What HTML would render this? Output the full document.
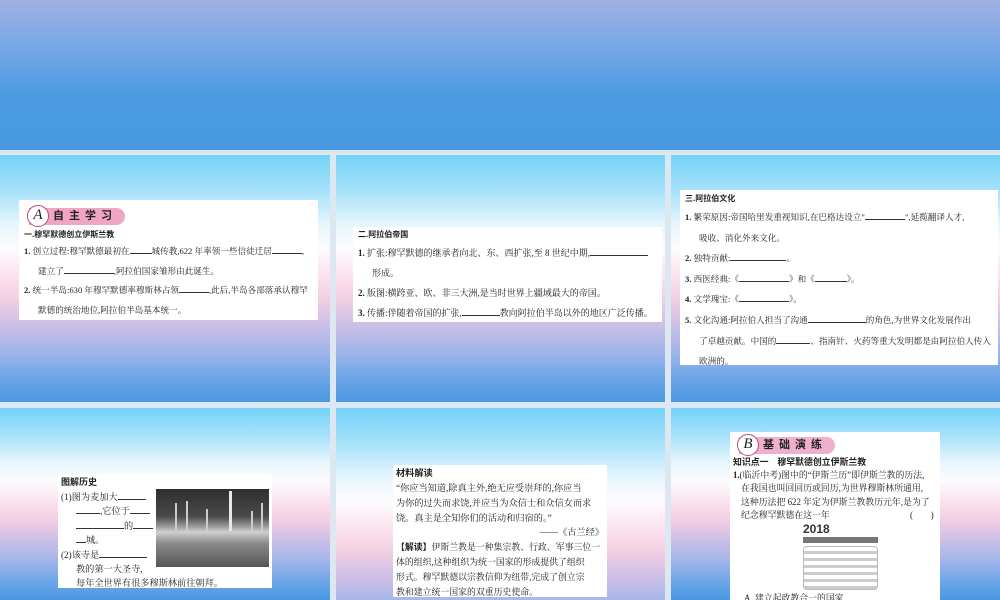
<!DOCTYPE html>
<html><head><meta charset="utf-8"><style>
*{margin:0;padding:0;box-sizing:border-box}
html,body{width:1000px;height:600px;overflow:hidden}
body{background:#dde7f1;position:relative;font-family:"Liberation Serif","Noto Serif CJK SC",serif;color:#222}
.top{position:absolute;left:0;top:0;width:1000px;height:150px;background:linear-gradient(#a0b1e3 0%,#78a8e6 30%,#4b9ae2 65%,#4899e1 100%)}
.p{position:absolute;height:247px;background:linear-gradient(#74d2f8 0%,#a9e2fa 15%,#e6f6fd 28%,#fdfbfd 38%,#fae0ec 50%,#f3cfe2 58%,#cfc0e6 68%,#9fb4ea 80%,#6ea6e8 90%,#4a98e2 100%)}
.w{position:absolute;background:#fff;overflow:hidden;white-space:nowrap}
.b{font-family:"Liberation Sans","Noto Sans CJK SC",sans-serif;font-weight:bold}
.u{display:inline-block;border-bottom:1px solid #333;height:10px;vertical-align:baseline}
.badge{display:inline-block;background:#f1a5c5;border-radius:0 10px 10px 0;height:17px;padding:0 8px 0 24px;font-family:"Liberation Sans","Noto Sans CJK SC",sans-serif;font-weight:bold;font-size:11px;line-height:17px;letter-spacing:5px;position:relative;color:#222}
.badge i{position:absolute;left:-2px;top:-3px;width:22px;height:22px;border-radius:50%;border:1.5px solid #b04a80;background:#fff;font-style:italic;font-family:"Liberation Serif",serif;font-size:15px;line-height:19px;text-align:center;letter-spacing:0;font-weight:normal}
.ind{padding-left:14px}
</style></head><body>
<div class="top"></div>
<div class="p" style="left:0;top:155px;width:330px"></div>
<div class="p" style="left:336px;top:155px;width:329px"></div>
<div class="p" style="left:671px;top:155px;width:329px"></div>
<div class="p" style="left:0;top:408px;width:330px;height:192px"></div>
<div class="p" style="left:336px;top:408px;width:329px;height:192px;background-size:100% 247px"></div>
<div class="p" style="left:671px;top:408px;width:329px;height:192px"></div>

<div class="w" style="left:19px;top:200px;width:299px;height:120px;padding:4px 5px;font-size:8.6px;line-height:19.5px">
<div style="margin:3px 0 0 5px;height:20px"><span class="badge"><i>A</i>自主学习</span></div>
<div class="b" style="font-size:8px;line-height:14px;margin-top:1px">一.穆罕默德创立伊斯兰教</div>
<div><b>1.</b> 创立过程:穆罕默德最初在<span class="u" style="width:22px"></span>城传教,622 年率领一些信徒迁居<span class="u" style="width:30px"></span>,</div>
<div class="ind">建立了<span class="u" style="width:50px"></span>,阿拉伯国家雏形由此诞生。</div>
<div><b>2.</b> 统一半岛:630 年穆罕默德率穆斯林占领<span class="u" style="width:30px"></span>,此后,半岛各部落承认穆罕</div>
<div class="ind">默德的统治地位,阿拉伯半岛基本统一。</div>
</div>

<div class="w" style="left:353px;top:227px;width:309px;height:95px;padding:0 5px;font-size:9px;line-height:20px">
<div class="b" style="font-size:8px;line-height:16px">二.阿拉伯帝国</div>
<div><b>1.</b> 扩张:穆罕默德的继承者向北、东、西扩张,至 8 世纪中期,<span class="u" style="width:58px"></span></div>
<div class="ind">形成。</div>
<div><b>2.</b> 版图:横跨亚、欧、非三大洲,是当时世界上疆域最大的帝国。</div>
<div><b>3.</b> 传播:伴随着帝国的扩张,<span class="u" style="width:38px"></span>教向阿拉伯半岛以外的地区广泛传播。</div>
</div>

<div class="w" style="left:680px;top:190px;width:318px;height:175px;padding:0 5px;font-size:8.6px;line-height:20.6px">
<div class="b" style="font-size:8px;line-height:17px">三.阿拉伯文化</div>
<div><b>1.</b> 繁荣原因:帝国哈里发重视知识,在巴格达设立"<span class="u" style="width:40px"></span>",延揽翻译人才,</div>
<div class="ind">吸收、消化外来文化。</div>
<div><b>2.</b> 独特贡献:<span class="u" style="width:56px"></span>。</div>
<div><b>3.</b> 西医经典:《<span class="u" style="width:50px"></span>》和《<span class="u" style="width:32px"></span>》。</div>
<div><b>4.</b> 文学瑰宝:《<span class="u" style="width:50px"></span>》。</div>
<div><b>5.</b> 文化沟通:阿拉伯人担当了沟通<span class="u" style="width:58px"></span>的角色,为世界文化发展作出</div>
<div class="ind">了卓越贡献。中国的<span class="u" style="width:34px"></span>、指南针、火药等重大发明都是由阿拉伯人传入</div>
<div class="ind">欧洲的。</div>
</div>

<div class="w" style="left:58px;top:474px;width:214px;height:114px;padding:0 3px;font-size:9.2px;line-height:14.4px">
<div class="b" style="font-size:9px;line-height:16px">图解历史</div>
<div>(1)图为麦加大<span class="u" style="width:28px"></span></div>
<div style="padding-left:15px"><span class="u" style="width:24px"></span>,它位于<span class="u" style="width:20px"></span></div>
<div style="padding-left:15px"><span class="u" style="width:48px"></span>的<span class="u" style="width:20px"></span></div>
<div style="padding-left:15px"><span class="u" style="width:10px"></span>城。</div>
<div>(2)该寺是<span class="u" style="width:48px"></span></div>
<div style="padding-left:15px">教的第一大圣寺,</div>
<div style="padding-left:15px">每年全世界有很多穆斯林前往朝拜。</div>
<div style="position:absolute;left:98px;top:15px;width:113px;height:78px;background:linear-gradient(#2e2e2e 0%,#4a4a4a 35%,#9a9a9a 48%,#d0d0d0 55%,#8a8a8a 70%,#555 100%)">
<div style="position:absolute;left:73px;top:2px;width:3px;height:40px;background:#e8e8e8"></div>
<div style="position:absolute;left:19px;top:14px;width:2px;height:28px;background:#ccc"></div>
<div style="position:absolute;left:30px;top:12px;width:2px;height:30px;background:#ccc"></div>
<div style="position:absolute;left:50px;top:20px;width:2px;height:22px;background:#ccc"></div>
<div style="position:absolute;left:95px;top:22px;width:2px;height:20px;background:#ccc"></div>
<div style="position:absolute;left:105px;top:14px;width:2px;height:28px;background:#ccc"></div>
</div>
</div>

<div class="w" style="left:393px;top:465px;width:214px;height:132px;padding:0 3px;font-size:9.2px;line-height:14.8px">
<div class="b" style="line-height:14px;margin-top:1px">材料解读</div>
<div style="margin-top:1px">“你应当知道,除真主外,绝无应受崇拜的,你应当<br>为你的过失而求饶,并应当为众信士和众信女而求<br>饶。真主是全知你们的活动和归宿的。”</div>
<div style="text-align:right">——《古兰经》</div>
<div style="font-size:8.9px"><b class="b">【解读】</b>伊斯兰教是一种集宗教、行政、军事三位一<br>体的组织,这种组织为统一国家的形成提供了组织<br>形式。穆罕默德以宗教信仰为纽带,完成了创立宗<br>教和建立统一国家的双重历史使命。</div>
</div>

<div class="w" style="left:730px;top:432px;width:210px;height:168px;padding:0 3px;font-size:8.9px;line-height:13.3px">
<div style="margin:5px 0 0 6px;height:19px"><span class="badge" style="background:#eeb0cc"><i>B</i>基础演练</span></div>
<div class="b" style="line-height:13px">知识点一　穆罕默德创立伊斯兰教</div>
<div><b>1.</b>(临沂中考)图中的“伊斯兰历”即伊斯兰教的历法,</div>
<div style="padding-left:8px">在我国也叫回回历或回历,为世界穆斯林所通用,<br>这种历法把 622 年定为伊斯兰教教历元年,是为了<br>纪念穆罕默德在这一年<span style="position:absolute;left:180px">(　　)</span></div>
<div style="position:absolute;left:73px;top:91px;width:75px;height:68px">
<div style="font-family:'Liberation Sans',sans-serif;font-weight:bold;font-size:12px;line-height:12px;color:#333">2018</div>
<div style="height:6px;background:#777;margin-top:2px"></div>
<div style="height:44px;margin-top:3px;border:1px solid #bbb;border-radius:4px;background:repeating-linear-gradient(#fff 0 4px,#ccc 4px 7px)"></div>
</div>
<div style="position:absolute;left:14px;top:160px">A. 建立起政教合一的国家</div>
</div>
</body></html>
